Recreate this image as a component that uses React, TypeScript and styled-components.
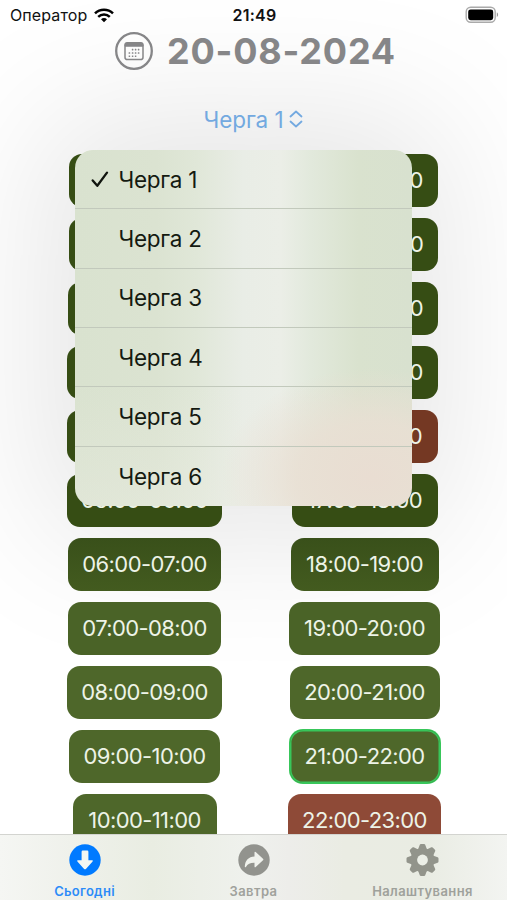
import React from "react";
import styled, { createGlobalStyle } from "styled-components";

const Global = createGlobalStyle`
  *, *::before, *::after { box-sizing: border-box; }
  body { margin: 0; background: #fff; font-family: Inter, "Liberation Sans", sans-serif; }
`;

const Screen = styled.div`
  position: relative;
  z-index: 0;
  width: 507px;
  height: 900px;
  overflow: hidden;
  display: flex;
  flex-direction: column;
  background: #fff;
`;

const StatusBar = styled.div`
  display: grid;
  grid-template-columns: 1fr auto 1fr;
  align-items: center;
  height: 30px;
  padding: 0 8px 0 10px;
  color: #111;
  font-size: 16px;
`;

const Carrier = styled.div`
  display: flex;
  align-items: center;
  gap: 7px;
  letter-spacing: 0.1px;
`;

const Clock = styled.div`
  font-size: 16px;
  font-weight: 600;
  letter-spacing: 0.3px;
`;

const BatterySlot = styled.div`
  display: flex;
  justify-content: flex-end;
`;

const Heading = styled.header`
  display: flex;
  align-items: center;
  height: 42px;
  padding-left: 115px;
  gap: 14px;
  color: #868688;
`;

const DateText = styled.h1`
  margin: 0;
  font-size: 36px;
  line-height: 42px;
  font-weight: 700;
  letter-spacing: 0.8px;
  white-space: nowrap;
`;

const Picker = styled.div`
  position: relative;
  display: flex;
  justify-content: center;
  align-items: center;
  height: 30px;
  margin-top: 32px;
  gap: 6px;
  color: #73a9e0;
  font-size: 22.5px;
`;

const PickerLabel = styled.span`
  letter-spacing: -0.1px;
`;

const MenuShade = styled.div`
  position: absolute;
  z-index: -1;
  left: 75px;
  top: 150px;
  width: 337px;
  height: 355px;
  border-radius: 18px;
  box-shadow: 0 0 140px 35px rgba(0, 0, 0, 0.1);
`;

const Menu = styled.ul`
  position: absolute;
  z-index: 2;
  left: 75px;
  top: 46px;
  width: 337px;
  height: 355.5px;
  margin: 0;
  padding: 0;
  list-style: none;
  overflow: hidden;
  border-radius: 18px;
  color: #141a11;
  background:
    radial-gradient(ellipse 150px 110px at 88% 92%, rgba(233, 221, 210, 1) 0%, rgba(233, 223, 211, 0.85) 50%, rgba(233, 223, 211, 0) 100%),
    linear-gradient(180deg, rgba(238, 238, 230, 0) 65%, rgba(238, 238, 230, 0.35) 100%),
    linear-gradient(90deg, #d9e2cf 0%, #dbe3d1 24%, #e0e7d8 36%, #e9ede6 50%, #ebeee7 61%, #e2e9dc 70%, #d9e2ce 84%, #d8e1cf 100%);
`;

const MenuItem = styled.li`
  display: grid;
  grid-template-columns: 43.5px 1fr;
  align-items: center;
  height: 59.35px;
  font-size: 22.5px;
  letter-spacing: -0.3px;
  border-bottom: 1px solid #c2c9bc;
  &:last-child { border-bottom: 0; }
`;

const CheckSlot = styled.span`
  display: flex;
  padding-left: 16px;
`;

const Schedule = styled.main`
  flex: 1;
  min-height: 0;
  overflow: hidden;
  display: grid;
  grid-template-columns: 220px 220px;
  padding: 19.5px 0 0 34.5px;
`;

const Column = styled.div`
  display: flex;
  flex-direction: column;
  align-items: center;
  gap: 11px;
`;

const Slot = styled.div<{ $w: number; $bg: string; $current?: boolean }>`
  flex: none;
  display: flex;
  align-items: center;
  justify-content: center;
  width: ${(p) => p.$w}px;
  height: 53px;
  border-radius: 13px;
  background: ${(p) => p.$bg};
  color: #edf3e7;
  font-size: 22px;
  letter-spacing: -0.6px;
  white-space: nowrap;
  box-shadow: ${(p) => (p.$current ? "0 0 0 1px #38c65a, inset 0 0 0 1.5px #38c65a" : "none")};
`;

const TabBar = styled.nav`
  position: relative;
  flex: none;
  display: grid;
  grid-template-columns: repeat(3, 1fr);
  height: 66.5px;
  border-top: 1px solid #d3d4d0;
  background: linear-gradient(90deg, #f5f6f3 0%, #eff1eb 14%, #e9ede2 30%, #eff1ed 49%, #ededea 57%, #eaece3 68%, #e9ece3 84%, #f3f4f1 100%);
`;

const Tab = styled.div<{ $active?: boolean }>`
  display: flex;
  flex-direction: column;
  align-items: center;
  padding-top: 9.5px;
  gap: 5.5px;
  color: ${(p) => (p.$active ? "#087bfb" : "#92948f")};
  font-size: 13px;
  line-height: 18px;
  font-weight: 600;
`;

const TabLabel = styled.span<{ $spacing: number }>`
  letter-spacing: ${(p) => p.$spacing}px;
  opacity: 0.85;
`;

const dark = "#364d14";
const mid = "linear-gradient(#39501a, #435b1f)";
const light = "#4a6327";
const lit = "#4e672a";

type Entry = { text: string; w: number; bg: string; current?: boolean };

const morning: Entry[] = [
  { text: "00:00-01:00", w: 151, bg: dark },
  { text: "01:00-02:00", w: 151, bg: dark },
  { text: "02:00-03:00", w: 153, bg: dark },
  { text: "03:00-04:00", w: 155, bg: dark },
  { text: "04:00-05:00", w: 155, bg: dark },
  { text: "05:00-06:00", w: 155, bg: dark },
  { text: "06:00-07:00", w: 153, bg: mid },
  { text: "07:00-08:00", w: 153, bg: light },
  { text: "08:00-09:00", w: 155, bg: lit },
  { text: "09:00-10:00", w: 151, bg: lit },
  { text: "10:00-11:00", w: 144, bg: lit },
];

const evening: Entry[] = [
  { text: "12:00-13:00", w: 146, bg: dark },
  { text: "13:00-14:00", w: 147, bg: dark },
  { text: "14:00-15:00", w: 147, bg: dark },
  { text: "15:00-16:00", w: 147, bg: dark },
  { text: "16:00-17:00", w: 146, bg: "#743823" },
  { text: "17:00-18:00", w: 146, bg: dark },
  { text: "18:00-19:00", w: 148, bg: mid },
  { text: "19:00-20:00", w: 151, bg: light },
  { text: "20:00-21:00", w: 150, bg: lit },
  { text: "21:00-22:00", w: 150, bg: lit, current: true },
  { text: "22:00-23:00", w: 153, bg: "#8e4a37" },
];

const WifiIcon = () => (
  <svg width="20" height="15" viewBox="0 0 20 15" fill="none" stroke="#000" strokeWidth="2.5">
    <path d="M1 5.3C6 .4 14 .4 19 5.3" />
    <path d="M4.2 8.8c3.3-3.1 8.3-3.1 11.6 0" />
    <path d="M7 11.2c1.8-1.6 4.2-1.6 6 0l-3 3z" fill="#000" stroke="none" />
  </svg>
);

const BatteryIcon = () => (
  <svg width="34" height="18" viewBox="0 0 34 18">
    <rect x="1.2" y="1.2" width="29" height="15" rx="4.5" fill="none" stroke="#aaa" strokeWidth="1.4" />
    <rect x="3.2" y="3.4" width="25" height="10.8" rx="2.4" fill="#000" />
    <path d="M31.8 6.6c1.7.6 1.7 3.8 0 4.4z" fill="#999" />
  </svg>
);

const dots: [number, number][] = [
  [17.6, 17.6], [20.6, 17.6], [23.6, 17.6],
  [14.4, 21], [17.6, 21], [20.6, 21], [23.6, 21],
  [14.4, 24.2], [17.6, 24.2], [20.6, 24.2],
];

const CalendarIcon = () => (
  <svg width="38" height="38" viewBox="0 0 38 38" fill="none" stroke="#868688">
    <circle cx="19" cy="19" r="17.8" strokeWidth="2.3" />
    <rect x="10" y="10.8" width="18" height="16.8" rx="2.4" strokeWidth="1.5" />
    <path d="M10 13.2a2.4 2.4 0 0 1 2.4-2.4h13.2a2.4 2.4 0 0 1 2.4 2.4v1H10z" fill="#868688" strokeWidth="1" />
    {dots.map(([x, y]) => (
      <rect key={`${x}-${y}`} x={x - 0.8} y={y - 0.8} width="1.6" height="1.6" rx=".4" fill="#868688" stroke="none" />
    ))}
  </svg>
);

const ChevronsIcon = () => (
  <svg width="14" height="18" viewBox="0 0 14 18" fill="none" stroke="currentColor" strokeWidth="1.8" strokeLinecap="round" strokeLinejoin="round">
    <path d="M1.5 6.5 7 1.5l5.5 5M1.5 11.5l5.5 5 5.5-5" />
  </svg>
);

const CheckIcon = () => (
  <svg width="18" height="17" viewBox="0 0 18 17" fill="none" stroke="#11150f" strokeWidth="2.3" strokeLinecap="round" strokeLinejoin="round">
    <path d="M1.7 9.4 6.3 14.8 16 1.6" />
  </svg>
);

const DownIcon = () => (
  <svg width="32" height="32" viewBox="0 0 32 32">
    <circle cx="16" cy="16" r="15.7" fill="#007aff" />
    <path d="M12.6 7.7q0-1.200 1.200-1.200h4.400q1.200 0 1.200 1.200v8.500h3.700q1.300.1.500 1.200l-6.700 7.500q-.9.900-1.800 0l-6.700-7.500q-.8-1.100.5-1.200h3.700z" fill="#f4f7f2" />
  </svg>
);

const ForwardIcon = () => (
  <svg width="32" height="32" viewBox="0 0 32 32">
    <circle cx="16" cy="16" r="15.7" fill="#92938e" />
    <path d="M16.500 8.500q.1-1.300 1.200-.5l7.300 6.700q.8.800 0 1.600l-7.300 6.800q-1.100.8-1.200-.5v-3.800c-4.300-.1-6.800 1.200-8.600 4.100-.6.800-1.200.500-1.100-.6.400-6 3.700-9.500 9.700-9.800z" fill="#f0f2ed" />
  </svg>
);

const GearIcon = () => (
  <svg width="33" height="32" viewBox="0 0 33 32">
    <g fill="#92948b">
      {[0, 45, 90, 135].map((a) => (
        <path key={a} transform={`rotate(${a} 16.5 16)`} d="M12.200 5 13.800.8q.3-.8 1.100-.8h3.200q.8 0 1.100.8L20.800 5v22l-1.600 4.200q-.3.800-1.100.8h-3.200q-.8 0-1.100-.8L12.200 27z" />
      ))}
      <circle cx="16.5" cy="16" r="12" />
    </g>
    <circle cx="16.5" cy="16" r="5.4" fill="#ecefe7" />
  </svg>
);

const SlotColumn = ({ entries }: { entries: Entry[] }) => (
  <Column>
    {entries.map((e) => (
      <Slot key={e.text} $w={e.w} $bg={e.bg} $current={e.current}>{e.text}</Slot>
    ))}
  </Column>
);

export default function App() {
  return (
    <>
      <Global />
      <Screen>
        <MenuShade />
        <StatusBar>
          <Carrier>Оператор <WifiIcon /></Carrier>
          <Clock>21:49</Clock>
          <BatterySlot><BatteryIcon /></BatterySlot>
        </StatusBar>
        <Heading>
          <CalendarIcon />
          <DateText>20-08-2024</DateText>
        </Heading>
        <Picker>
          <PickerLabel>Черга 1</PickerLabel>
          <ChevronsIcon />
          <Menu>
            {[1, 2, 3, 4, 5, 6].map((n) => (
              <MenuItem key={n}>
                <CheckSlot>{n === 1 && <CheckIcon />}</CheckSlot>
                <span>Черга {n}</span>
              </MenuItem>
            ))}
          </Menu>
        </Picker>
        <Schedule>
          <SlotColumn entries={morning} />
          <SlotColumn entries={evening} />
        </Schedule>
        <TabBar>
          <Tab $active><DownIcon /><TabLabel $spacing={0.3}>Сьогодні</TabLabel></Tab>
          <Tab><ForwardIcon /><TabLabel $spacing={0.4}>Завтра</TabLabel></Tab>
          <Tab><GearIcon /><TabLabel $spacing={0.4}>Налаштування</TabLabel></Tab>
        </TabBar>
      </Screen>
    </>
  );
}
